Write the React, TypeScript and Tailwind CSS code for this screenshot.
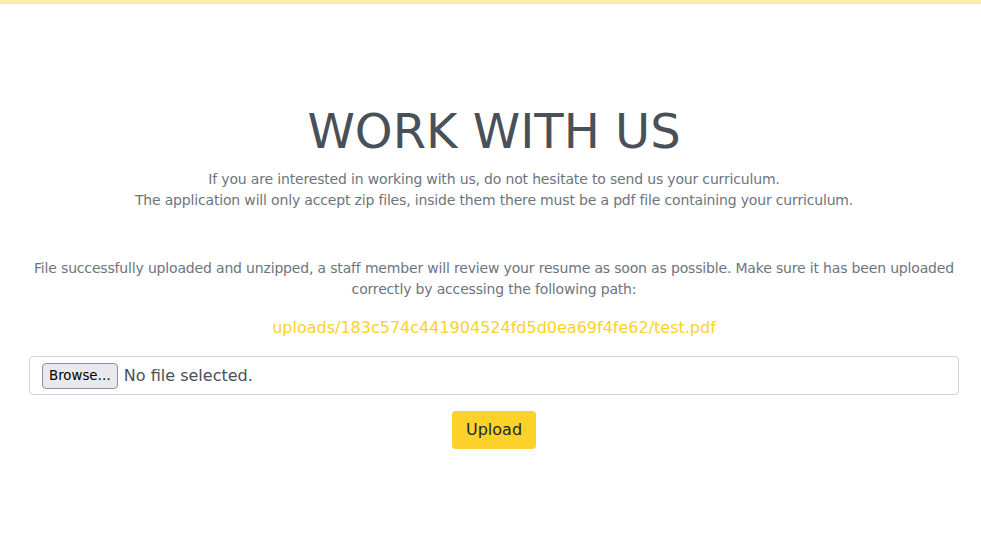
import React from "react";

export default function App() {
  return (
    <div className="min-h-[547px] bg-white" style={{ fontFamily: '"DejaVu Sans", sans-serif' }}>
      <div className="h-[4px] bg-[#ffeba7]" />
      <div className="pl-[29px] pr-[22px] pt-[99px] text-center">
        <h1 className="text-[48px] leading-[1.2] font-normal text-[#495057] mb-[8px]">WORK WITH US</h1>
        <p className="text-[14px] leading-[21px] tracking-[-0.17px] text-[#6c757d]">
          If you are interested in working with us, do not hesitate to send us your curriculum.
          <br />
          The application will only accept zip files, inside them there must be a pdf file containing your curriculum.
        </p>
        <p className="mt-[47px] text-[14px] leading-[21px] tracking-[-0.17px] text-[#6c757d]">
          File successfully uploaded and unzipped, a staff member will review your resume as soon as possible. Make sure it has been uploaded correctly by accessing the following path:
        </p>
        <p className="mt-[16px] text-[16px] leading-[24px]">
          <a href="#" className="text-[#fcd12a]">uploads/183c574c441904524fd5d0ea69f4fe62/test.pdf</a>
        </p>
        <div className="mt-[16px] h-[39px] border border-[#ced4da] rounded-[4px] flex items-center pl-[12px] pt-[2px] text-left">
          <span className="h-[26px] px-[6px] flex items-center bg-[#e9e9ed] border border-[#8f8f9d] rounded-[4px] text-[13.33px] text-[#000]">
            Browse…
          </span>
          <span className="ml-[6px] text-[16px] text-[#495057]">No file selected.</span>
        </div>
        <div className="mt-[16px] flex justify-center">
          <button className="h-[38px] px-[14px] bg-[#fcd12a] rounded-[4px] text-[16px] text-[#212529]">
            Upload
          </button>
        </div>
      </div>
    </div>
  );
}
